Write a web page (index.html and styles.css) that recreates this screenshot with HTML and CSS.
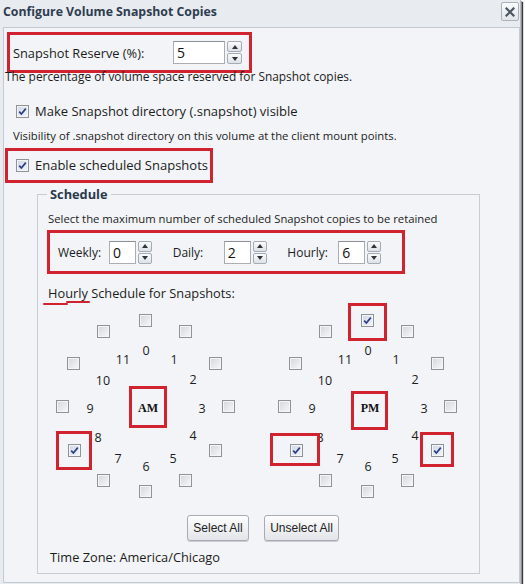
FILE: index.html
```html
<!DOCTYPE html>
<html>
<head>
<meta charset="utf-8">
<title>Configure Volume Snapshot Copies</title>
<link rel="stylesheet" href="styles.css">
</head>
<body>
<div class="dialog">
  <div class="titlebar">
    <span class="title">Configure Volume Snapshot Copies</span>
    <span class="close"><svg width="10" height="10" viewBox="0 0 10 10"><path d="M1.5 1.5 L8.5 8.5 M8.5 1.5 L1.5 8.5" stroke="#4d5560" stroke-width="2.2" stroke-linecap="square"/></svg></span>
  </div>
  <div class="panel">
    <div class="hl reserve">
      <span class="reserve-lbl">Snapshot Reserve (%):</span>
      <span class="num-input wide">5</span>
      <span class="spin"><span class="sb up"></span><span class="sb down"></span></span>
    </div>
    <p class="desc first">The percentage of volume space reserved for Snapshot copies.</p>
    <div class="check-row make"><span class="cb checked"><svg width="11" height="11" viewBox="0 0 11 11"><path d="M2.2 5.6 L4.4 8 L8.8 2.6" fill="none" stroke="#2b3f86" stroke-width="1.7"/></svg></span><span>Make Snapshot directory (.snapshot) visible</span></div>
    <p class="desc vis">Visibility of .snapshot directory on this volume at the client mount points.</p>
    <div class="hl enable">
      <div class="check-row"><span class="cb checked"><svg width="11" height="11" viewBox="0 0 11 11"><path d="M2.2 5.6 L4.4 8 L8.8 2.6" fill="none" stroke="#2b3f86" stroke-width="1.7"/></svg></span><span>Enable scheduled Snapshots</span></div>
    </div>
    <fieldset class="schedule">
      <legend>Schedule</legend>
      <p class="desc sel">Select the maximum number of scheduled Snapshot copies to be retained</p>
      <div class="hl counts">
        <div class="field"><span class="flabel">Weekly:</span><span class="num-input">0</span><span class="spin"><span class="sb up"></span><span class="sb down"></span></span></div>
        <div class="field"><span class="flabel">Daily:</span><span class="num-input">2</span><span class="spin"><span class="sb up"></span><span class="sb down"></span></span></div>
        <div class="field"><span class="flabel">Hourly:</span><span class="num-input">6</span><span class="spin"><span class="sb up"></span><span class="sb down"></span></span></div>
      </div>
      <p class="hourly"><span class="underlined">Hourly</span> Schedule for Snapshots:</p>
      <div class="clocks">
        <div class="clock">
          <span class="cb h0"></span><span class="cb h1"></span><span class="cb h2"></span><span class="cb h3"></span>
          <span class="cb h4"></span><span class="cb h5"></span><span class="cb h6"></span><span class="cb h7"></span>
          <span class="cb h8 checked"><svg width="11" height="11" viewBox="0 0 11 11"><path d="M2.2 5.6 L4.4 8 L8.8 2.6" fill="none" stroke="#2b3f86" stroke-width="1.7"/></svg></span>
          <span class="cb h9"></span><span class="cb h10"></span><span class="cb h11"></span>
          <span class="hr n0">0</span><span class="hr n1">1</span><span class="hr n2">2</span><span class="hr n3">3</span>
          <span class="hr n4">4</span><span class="hr n5">5</span><span class="hr n6">6</span><span class="hr n7">7</span>
          <span class="hr n8">8</span><span class="hr n9">9</span><span class="hr n10">10</span><span class="hr n11">11</span>
          <span class="ampm">AM</span>
          <span class="mark am-lbl"></span>
          <span class="mark am-8"></span>
        </div>
        <div class="clock">
          <span class="cb h0 checked"><svg width="11" height="11" viewBox="0 0 11 11"><path d="M2.2 5.6 L4.4 8 L8.8 2.6" fill="none" stroke="#2b3f86" stroke-width="1.7"/></svg></span>
          <span class="cb h1"></span><span class="cb h2"></span><span class="cb h3"></span>
          <span class="cb h4 checked"><svg width="11" height="11" viewBox="0 0 11 11"><path d="M2.2 5.6 L4.4 8 L8.8 2.6" fill="none" stroke="#2b3f86" stroke-width="1.7"/></svg></span>
          <span class="cb h5"></span><span class="cb h6"></span><span class="cb h7"></span>
          <span class="cb h8 checked"><svg width="11" height="11" viewBox="0 0 11 11"><path d="M2.2 5.6 L4.4 8 L8.8 2.6" fill="none" stroke="#2b3f86" stroke-width="1.7"/></svg></span>
          <span class="cb h9"></span><span class="cb h10"></span><span class="cb h11"></span>
          <span class="hr n0">0</span><span class="hr n1">1</span><span class="hr n2">2</span><span class="hr n3">3</span>
          <span class="hr n4">4</span><span class="hr n5">5</span><span class="hr n6">6</span><span class="hr n7">7</span>
          <span class="hr n8">8</span><span class="hr n9">9</span><span class="hr n10">10</span><span class="hr n11">11</span>
          <span class="ampm">PM</span>
          <span class="mark pm-0"></span>
          <span class="mark pm-lbl"></span>
          <span class="mark pm-8"></span>
          <span class="mark pm-4"></span>
        </div>
      </div>
      <div class="buttons">
        <button class="btn select">Select All</button>
        <button class="btn unselect">Unselect All</button>
      </div>
      <p class="tz">Time Zone: America/Chicago</p>
    </fieldset>
  </div>
</div>
</body>
</html>
```
FILE: styles.css
```css
* { box-sizing: border-box; }
html, body { margin: 0; padding: 0; background: #ffffff; }
body {
  font-family: "Open Sans", "Noto Sans", sans-serif;
  color: #1c1c1c;
}
p { margin: 0; }

.dialog {
  width: 521px;
  height: 584px;
  background: #e8ebef;
  border-right: 1px solid #b9bdc3;
  box-shadow: 1px 1px 0 #8a8d92, 2px 2px 1px #3a3a3a;
}

.titlebar {
  height: 27px;
  display: flex;
  justify-content: space-between;
  align-items: flex-start;
}
.title {
  font-weight: 700;
  font-size: 12.3px;
  line-height: 24px;
  padding-left: 3px;
  color: #2d3d50;
}
.close {
  width: 18px;
  height: 19px;
  margin-top: 2px;
  margin-right: 1px;
  border: 1px solid #a9b1bb;
  border-radius: 2px;
  background: linear-gradient(#fbfcfd, #e1e5ea);
  display: flex;
  align-items: center;
  justify-content: center;
}

.panel {
  margin-left: 3px;
  width: 517px;
  height: 556px;
  background: #f2f4f7;
  border: 1px solid #c4cad2;
}

.hl {
  border: 3px solid #d0232f;
}

.reserve {
  margin: 4px 0 0 3px;
  width: 245px;
  height: 41px;
  display: flex;
  align-items: center;
  padding-left: 3px;
}
.reserve-lbl {
  width: 160px;
  font-size: 12.8px;
}

.num-input {
  width: 27px;
  height: 23px;
  background: #fff;
  border: 1px solid #abadb3;
  border-top-color: #8c8f95;
  font-size: 14px;
  line-height: 21px;
  padding-left: 3px;
  color: #111;
}
.num-input.wide { width: 52px; }

.spin {
  display: flex;
  flex-direction: column;
  margin-left: 2px;
  width: 14px;
  height: 23px;
}
.sb {
  flex: 1;
  border: 1px solid #a3abb5;
  border-radius: 2px;
  background: linear-gradient(#fafbfc, #dde2e8);
  display: flex;
  align-items: center;
  justify-content: center;
}
.sb + .sb { margin-top: 1px; }
.sb.up::after {
  content: "";
  border-left: 3px solid transparent;
  border-right: 3px solid transparent;
  border-bottom: 4px solid #303438;
}
.sb.down::after {
  content: "";
  border-left: 3px solid transparent;
  border-right: 3px solid transparent;
  border-top: 4px solid #303438;
}
.reserve .spin { width: 15px; }

.desc {
  font-size: 11.3px;
  line-height: 15px;
}
.desc.first { margin: -4px 0 0 1px; font-size: 11.9px; }
.desc.vis { margin: 8px 0 0 9px; }

.check-row {
  display: flex;
  align-items: center;
  height: 18px;
  font-size: 13px;
}
.check-row .cb { margin-right: 6px; }
.make { margin: 18px 0 0 12px; }

.cb {
  display: inline-flex;
  align-items: center;
  justify-content: center;
  width: 13px;
  height: 13px;
  border: 1px solid #8f9296;
  background: linear-gradient(135deg, #d4d6d9, #f7f8f9);
  box-shadow: inset 0 0 0 1px #f4f5f6;
  flex: none;
}
.cb.checked {
  background: linear-gradient(135deg, #cfd6e4, #f3f5fa);
}

.enable {
  margin: 5px 0 0 1px;
  width: 208px;
  height: 35px;
  padding: 5px 0 0 8px;
}

.schedule {
  margin: 3px 0 0 33px;
  padding: 0 0 8px 0;
  width: 443px;
  border: 1px solid #c6ccd4;
}
.schedule legend {
  margin-left: 9px;
  padding: 0 3px;
  font-weight: 700;
  font-size: 12.8px;
  line-height: 16px;
  color: #2a3a4c;
}
.desc.sel { margin: 9px 0 0 10px; }

.counts {
  margin: 4px 0 0 9px;
  width: 358px;
  height: 44px;
  display: flex;
  align-items: center;
  padding-left: 8px;
}
.field {
  display: flex;
  align-items: center;
  width: 116px;
}
.flabel {
  width: 51px;
  font-size: 12px;
}

.hourly {
  margin: 11px 0 0 10px;
  font-size: 12.8px;
  line-height: 16px;
}
.underlined { position: relative; }
.underlined::before,
.underlined::after {
  content: "";
  position: absolute;
  height: 2px;
  background: #d0232f;
  border-radius: 1px;
}
.underlined::before { left: -5px; width: 25px; top: 19px; }
.underlined::after { left: 18px; width: 24px; top: 17px; }

.clocks {
  display: flex;
  gap: 22px;
  margin: 9px 0 0 7px;
}
.clock {
  position: relative;
  width: 200px;
  height: 185px;
}
.clock .cb { position: absolute; }
.h0 { left: 94px; top: 4px; }
.h1 { left: 134px; top: 15px; }
.h2 { left: 164px; top: 47px; }
.h3 { left: 177px; top: 90px; }
.h4 { left: 164px; top: 134px; }
.h5 { left: 134px; top: 164px; }
.h6 { left: 94px; top: 175px; }
.h7 { left: 52px; top: 164px; }
.h8 { left: 23px; top: 134px; }
.h9 { left: 11px; top: 90px; }
.h10 { left: 22px; top: 47px; }
.h11 { left: 52px; top: 15px; }

.hr {
  position: absolute;
  width: 20px;
  height: 14px;
  line-height: 14px;
  text-align: center;
  font-size: 12.5px;
}
.n0 { left: 91px; top: 34px; }
.n1 { left: 119px; top: 43px; }
.n2 { left: 138px; top: 63px; }
.n3 { left: 147px; top: 92px; }
.n4 { left: 138px; top: 119px; }
.n5 { left: 118px; top: 142px; }
.n6 { left: 91px; top: 150px; }
.n7 { left: 63px; top: 142px; }
.n8 { left: 43px; top: 121px; }
.n9 { left: 35px; top: 92px; }
.n10 { left: 48px; top: 64px; }
.n11 { left: 68px; top: 43px; }

.ampm {
  position: absolute;
  left: 88px;
  top: 91px;
  width: 30px;
  text-align: center;
  font-family: "Liberation Serif", serif;
  font-weight: 700;
  font-size: 12px;
  line-height: 14px;
  color: #111;
}

.mark {
  position: absolute;
  border: 3px solid #d0232f;
}
.am-lbl { left: 84px; top: 76px; width: 38px; height: 42px; }
.am-8 { left: 11px; top: 121px; width: 36px; height: 39px; }
.pm-0 { left: 81px; top: -7px; width: 39px; height: 38px; }
.pm-lbl { left: 84px; top: 81px; width: 37px; height: 39px; }
.pm-8 { left: 3px; top: 123px; width: 50px; height: 33px; }
.pm-4 { left: 153px; top: 122px; width: 34px; height: 35px; }

.buttons {
  display: flex;
  gap: 15px;
  margin: 20px 0 0 149px;
}
.btn {
  height: 26px;
  padding: 0;
  font-family: "Liberation Sans", Arial, sans-serif;
  font-size: 12px;
  color: #222;
  border: 1px solid #a7acb3;
  border-radius: 3px;
  background: linear-gradient(#fdfdfd, #e2e5e9);
  box-shadow: 0 1px 0 #c9cdd2;
}
.btn.select { width: 62px; }
.btn.unselect { width: 75px; }

.tz {
  margin: 8px 0 0 12px;
  font-size: 12.8px;
  line-height: 16px;
}
```
